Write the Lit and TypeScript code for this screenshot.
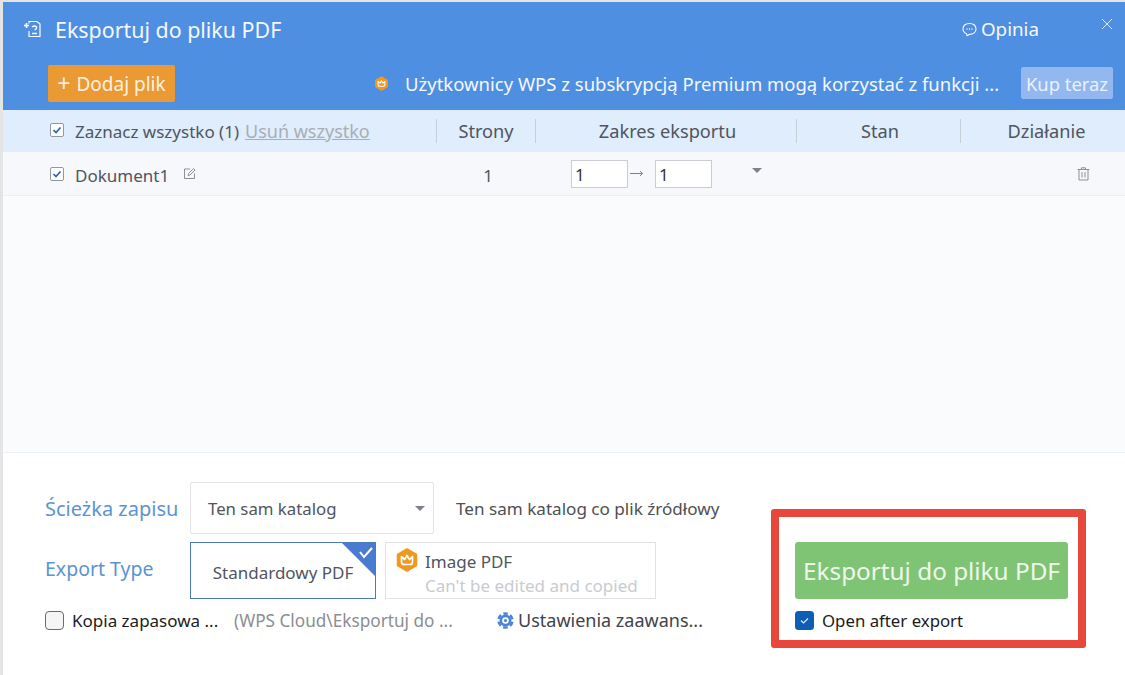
import { LitElement, html, css } from "lit";
import { customElement } from "lit/decorators.js";

const crown = (size: number) => html`<svg class="crown" width=${size} height=${size} viewBox="0 0 24 24">
  <path d="M12 1 L21.5 6.5 V17.5 L12 23 L2.5 17.5 V6.5 Z" fill="#f0981f" stroke="#f0981f" stroke-width="1.5" stroke-linejoin="round"/>
  <path d="M6.5 8.5 L9.5 11.5 L12 7.5 L14.5 11.5 L17.5 8.5 V14 Q17.5 16.5 15 16.5 H9 Q6.5 16.5 6.5 14 Z" fill="none" stroke="#fff" stroke-width="1.7" stroke-linejoin="round"/>
</svg>`;

const check = html`<svg class="cb" width="16" height="16" viewBox="0 0 16 16">
  <rect x="1.5" y="1.5" width="13" height="13" rx="1.5" fill="#fff" stroke="#8f98a6"/>
  <path d="M4.5 8 L7 10.5 L11.5 5.5" fill="none" stroke="#2f62a8" stroke-width="1.7"/>
</svg>`;

@customElement("app-root")
export class AppRoot extends LitElement {
  static styles = css`
    :host {
      display: block;
      width: 1125px;
      height: 675px;
      background: #e4e4e4;
      font-family: "Noto Sans", "Open Sans", sans-serif;
      color: #50555e;
      overflow: hidden;
    }
    * { box-sizing: border-box; }
    .win {
      position: relative;
      margin: 2px 0 0 3px;
      height: 673px;
      display: flex;
      flex-direction: column;
      background: #fff;
    }
    .head { background: #4f8fe2; height: 108px; color: #f4f8ff; flex: none; display: flex; flex-direction: column; }
    .title-row { height: 54px; display: flex; align-items: center; padding: 0 12px 0 20px; }
    .title { font-size: 21.4px; margin-left: 12px; flex: 1; white-space: nowrap; }
    .opinia { display: flex; align-items: center; gap: 4px; font-size: 18.8px; margin-right: 62px; }
    .x { margin: -10px 0 0 0; }
    .tool-row { height: 54px; display: flex; align-items: flex-start; padding: 9px 13px 0 45px; }
    .add {
      width: 127px; height: 37px; background: #eb9a33; border-radius: 2px; color: #fbf1e3;
      font-size: 19px; display: flex; align-items: center; justify-content: center; gap: 6px; white-space: nowrap; flex: none;
    }
    .plus { font-size: 23px; line-height: 1; }
    .notice { margin-left: 199px; display: flex; align-items: center; height: 37px; width: 647px; font-size: 18.5px; white-space: nowrap; flex: none; gap: 16px; }
    .buy {
      margin-left: 0; width: 92px; height: 32px; margin-top: 2px; background: #92b8ef; border-radius: 2px; color: #e9f1fc;
      font-size: 18.4px; display: flex; align-items: center; justify-content: center; white-space: nowrap; flex: none;
    }
    .cols { display: grid; grid-template-columns: 433px 99px 261px 164px 1fr; align-items: center; }
    .thead { height: 42px; background: #dfedfc; font-size: 18.2px; flex: none; }
    .thead > div { display: flex; align-items: center; justify-content: center; height: 24px; border-left: 1px solid #c6ced8; white-space: nowrap; }
    .thead > div:first-child { border-left: 0; justify-content: flex-start; padding-left: 46px; }
    .thead > .shift { padding-left: 3px; }
    .thead > .shift2 { padding-left: 7px; }
    .thead .cb { margin-top: -2px; }
    .all { margin-left: 10px; font-size: 17px; }
    .rm { margin-left: 6px; color: #a9adb5; text-decoration: underline; font-size: 18px; }
    .row { height: 44px; background: #f6f8fb; border-bottom: 1px solid #eceef1; font-size: 17px; flex: none; }
    .first { display: flex; align-items: center; padding-left: 46px; }
    .name { margin: 4px 0 0 10px; }
    .edit { margin-left: 14px; }
    .num { text-align: center; margin: 4px 0 0 5px; }
    .range { display: flex; align-items: center; padding-left: 36px; }
    .inp { width: 57px; height: 28px; background: #fff; border: 1px solid #c9ccd1; padding-left: 3px; line-height: 27px; font-size: 17px; color: #333; }
    .arrow { width: 27px; display: flex; justify-content: flex-start; padding-left: 2px; }
    .tri { width: 0; height: 0; border: 5px solid transparent; border-top: 5px solid #7d828a; border-bottom: 0; }
    .range .tri { margin: -7px 0 0 40px; }
    .trash { justify-self: end; margin-right: 35px; margin-top: 1px; grid-column: 5; }
    .blank { flex: 1; background: #fafbfd; }
    .bottom {
      flex: none; height: 223px; border-top: 1px solid #eceff3; background: #fff;
      display: flex; padding: 29px 0 0 42px; font-size: 17px;
    }
    .left { width: 725px; flex: none; display: flex; flex-direction: column; }
    .line { display: flex; align-items: center; }
    .lab { width: 145px; font-size: 20px; color: #5b93d3; white-space: nowrap; flex: none; }
    .type .lab { font-size: 19.5px; margin-top: -4px; }
    .select {
      width: 244px; height: 52px; border: 1px solid #e3e5e8; border-radius: 2px; display: flex; align-items: center;
      justify-content: space-between; padding: 0 8px 0 17px; flex: none; font-size: 16.8px;
    }
    .desc { margin-left: 22px; white-space: nowrap; font-size: 17.1px; color: #4e4f52; }
    .type { margin-top: 8px; }
    .std {
      position: relative; width: 186px; height: 57px; border: 1px solid #4a7bb8; flex: none; display: flex; align-items: center;
      justify-content: center; padding-top: 3px; font-size: 17px; overflow: hidden; white-space: nowrap;
    }
    .corner { position: absolute; right: 0; top: 0; }
    .img {
      margin-left: 9px; width: 271px; height: 57px; border: 1px solid #dfe1e4; display: flex; flex: none; padding: 5px 0 0 9px; gap: 6px;
    }
    .img-text { display: flex; flex-direction: column; font-size: 17px; line-height: 24px; margin-top: 2px; white-space: nowrap; }
    .img-sub { color: #c9cbcf; }
    .opts { margin-top: 9px; height: 24px; }
    .box { width: 19px; height: 19px; border-radius: 4px; background: #f5f5f5; border: 1px solid #6b6b6b; flex: none; }
    .bk { margin-left: 8px; width: 162px; color: #1c1c1c; white-space: nowrap; }
    .path { width: 263px; color: #8b8e93; white-space: nowrap; font-size: 17.2px; }
    .gear { margin-right: 4px; }
    .adv { white-space: nowrap; color: #3f434a; font-size: 18px; }
    .right { padding-top: 60px; margin-left: 25px; width: 273px; flex: none; }
    .go {
      height: 57px; background: #7fc474; border-radius: 3px; color: #eef8eb; font-size: 24.3px; display: flex; align-items: center;
      justify-content: center; white-space: nowrap;
    }
    .after { margin-top: 9px; display: flex; align-items: center; gap: 8px; color: #1c1c1c; font-size: 16.8px; height: 24px; }
    .mark { position: absolute; left: 768px; top: 507px; width: 315px; height: 139px; border: 8px solid #e8483c; border-radius: 3px; pointer-events: none; }
  `;

  render() {
    return html`<div class="win">
      <div class="head">
        <div class="title-row">
          <svg width="20" height="20" viewBox="0 0 20 20" fill="none" stroke="#fff" stroke-width="1.2">
            <path d="M6 4.5 V2.5 H14 L17 5 V17.5 H6 V12"/>
            <path d="M1 6.5 H6 M3.5 4 V9" stroke-width="1.6"/>
            <path d="M9 8 Q11.5 6 13.5 8 Q14 10 11.5 11 M9 14.5 H14" stroke-width="1.3"/>
          </svg>
          <div class="title">Eksportuj do pliku PDF</div>
          <div class="opinia">
            <svg width="15" height="15" viewBox="0 0 15 15" fill="none" stroke="#f4f8ff" stroke-width="1.1">
              <path d="M7.5 1.5 C11.5 1.5 14 3.8 14 7 C14 10.2 11.5 12.4 7.5 12.4 L5 13.6 L4.5 11.8 C2.4 10.8 1 9.2 1 7 C1 3.8 3.5 1.5 7.5 1.5 Z"/>
              <path d="M4.5 7 H5.5 M7 7 H8 M9.5 7 H10.5" stroke-width="1.4"/>
            </svg>
            <span>Opinia</span>
          </div>
          <svg class="x" width="12" height="12" viewBox="0 0 12 12" stroke="#dcebff" stroke-width="1"><path d="M1 1 L11 11 M11 1 L1 11"/></svg>
        </div>
        <div class="tool-row">
          <div class="add"><span class="plus">+</span><span>Dodaj plik</span></div>
          <div class="notice">${crown(15)}<span>Użytkownicy WPS z subskrypcją Premium mogą korzystać z funkcji ...</span></div>
          <div class="buy">Kup teraz</div>
        </div>
      </div>
      <div class="cols thead">
        <div>${check}<span class="all">Zaznacz wszystko (1)</span><span class="rm">Usuń wszystko</span></div>
        <div>Strony</div><div class="shift">Zakres eksportu</div><div class="shift">Stan</div><div class="shift2">Działanie</div>
      </div>
      <div class="cols row">
        <div class="first">${check}<span class="name">Dokument1</span>
          <svg class="edit" width="13" height="13" viewBox="0 0 13 13" fill="none" stroke="#8b9097" stroke-width="1">
            <path d="M11.5 6.5 V11.5 H1.5 V2 H7"/><path d="M5 8.5 L5.5 6.5 L10.5 1.5 L12 3 L7 8 Z"/>
          </svg>
        </div>
        <div class="num">1</div>
        <div class="range">
          <div class="inp">1</div>
          <div class="arrow"><svg width="14" height="7" viewBox="0 0 14 7" fill="none" stroke="#7c8087" stroke-width="1"><path d="M0 3.5 H12.5 M10 1 L12.5 3.5 L10 6"/></svg></div>
          <div class="inp">1</div>
          <div class="tri"></div>
        </div>
        <svg class="trash" width="13" height="14" viewBox="0 0 13 14" fill="none" stroke="#8b9097" stroke-width="1">
          <path d="M0.5 2.5 H12.5 M4.5 2.5 V0.8 H8.5 V2.5 M2 2.5 V13 H11 V2.5 M5 5 V10.5 M8 5 V10.5"/>
        </svg>
      </div>
      <div class="blank"></div>
      <div class="bottom">
        <div class="left">
          <div class="line">
            <div class="lab">Ścieżka zapisu</div>
            <div class="select"><span>Ten sam katalog</span><div class="tri"></div></div>
            <div class="desc">Ten sam katalog co plik źródłowy</div>
          </div>
          <div class="line type">
            <div class="lab">Export Type</div>
            <div class="std">
              <span>Standardowy PDF</span>
              <svg class="corner" width="36" height="34" viewBox="0 0 36 34">
                <path d="M3 0 H36 V33 Z" fill="#4a7bd0"/>
                <path d="M21 9 L25 14 L33 5" fill="none" stroke="#fff" stroke-width="2"/>
              </svg>
            </div>
            <div class="img">
              ${crown(24)}
              <div class="img-text"><span>Image PDF</span><span class="img-sub">Can't be edited and copied</span></div>
            </div>
          </div>
          <div class="line opts">
            <div class="box"></div>
            <div class="bk">Kopia zapasowa ...</div>
            <div class="path">(WPS Cloud\\Eksportuj do ...</div>
            <svg class="gear" width="17" height="17" viewBox="0 0 16 16">
              <circle cx="8" cy="8" r="5.6" fill="#4a86d8"/>
              <circle cx="8" cy="8" r="6.6" fill="none" stroke="#4a86d8" stroke-width="2.4" stroke-dasharray="4.4 2.5" stroke-dashoffset="2.2" transform="rotate(-90 8 8)"/>
              <circle cx="8" cy="8" r="3.1" fill="#fff"/>
              <circle cx="8" cy="8" r="1.5" fill="#4a86d8"/>
            </svg>
            <div class="adv">Ustawienia zaawans...</div>
          </div>
        </div>
        <div class="right">
          <div class="go">Eksportuj do pliku PDF</div>
          <div class="after">
            <svg width="19" height="19" viewBox="0 0 19 19">
              <rect width="19" height="19" rx="3.5" fill="#0f5eb5"/>
              <path d="M6 9.5 L8.5 12 L13 7.5" fill="none" stroke="#dcebfb" stroke-width="1.2"/>
            </svg>
            <span>Open after export</span>
          </div>
        </div>
      </div>
      <div class="mark"></div>
    </div>`;
  }
}
